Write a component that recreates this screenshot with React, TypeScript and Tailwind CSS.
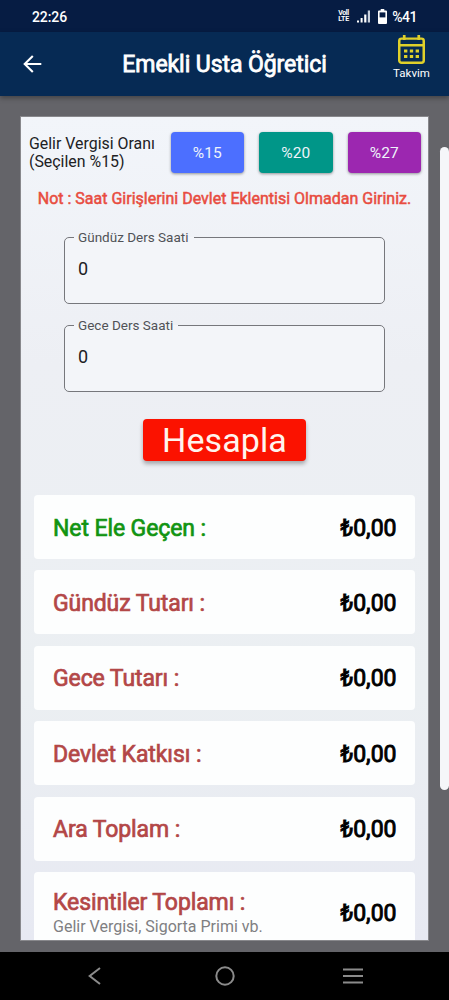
import React from "react";

const rates = [
  { label: "%15", color: "bg-[#4c6fff]" },
  { label: "%20", color: "bg-[#009688]" },
  { label: "%27", color: "bg-[#9c27b0]" },
];

const results = [
  { label: "Net Ele Geçen :", color: "text-[#119411]" },
  { label: "Gündüz Tutarı :", color: "text-[#b34747]" },
  { label: "Gece Tutarı :", color: "text-[#b34747]" },
  { label: "Devlet Katkısı :", color: "text-[#b34747]" },
  { label: "Ara Toplam :", color: "text-[#b34747]" },
  { label: "Kesintiler Toplamı :", color: "text-[#b34747]", note: "Gelir Vergisi, Sigorta Primi vb." },
];

function StatusBar() {
  return (
    <div className="flex h-8 items-center bg-[#061c43] pr-[32px] pl-8 text-white">
      <span className="pt-px text-[14px] leading-4 font-medium tracking-[-0.1px]">22:26</span>
      <div className="ml-auto flex items-center">
        <div className="flex w-3 flex-col text-[7px] leading-[6px] font-bold">
          <span className="tracking-[-0.4px]">Voll</span>
          <span className="tracking-[-0.2px]">LTE</span>
        </div>
        <svg className="ml-[7px]" width="14" height="13" viewBox="0 0 14 13" fill="white">
          <rect x="0" y="10.5" width="2" height="2" />
          <rect x="3.6" y="8" width="2" height="4.5" />
          <rect x="7.2" y="4.5" width="2.2" height="8" />
          <rect x="10.8" y="0.5" width="2.2" height="12" fill="#c8d0dc" />
        </svg>
        <svg className="ml-[7px]" width="9" height="15" viewBox="0 0 9 15">
          <path d="M2.7 0h3.6v1.6H8a1 1 0 0 1 1 1V14a1 1 0 0 1-1 1H1a1 1 0 0 1-1-1V2.6a1 1 0 0 1 1-1h1.7z" fill="white" />
          <rect x="1.6" y="3.4" width="5.8" height="5" fill="#061c43" />
        </svg>
        <span className="ml-[5px] pt-px text-[14px] leading-4 font-medium tracking-[-0.5px]">%41</span>
      </div>
    </div>
  );
}

function AppBar() {
  return (
    <header className="relative z-10 flex h-16 bg-[#062a54] text-white shadow-[0_2px_5px_rgba(0,0,0,0.35)]">
      <div className="flex w-[76px] items-center pl-[23px]">
        <svg width="19" height="18" viewBox="0 0 19 18" fill="none" stroke="white" strokeWidth="2.1">
          <path d="M18.3 9H1.7M9.8 .9 1.7 9l8.1 8.1" />
        </svg>
      </div>
      <h1 className="flex flex-1 items-center justify-center pt-[2px] pr-px text-[23px] font-normal tracking-[-0.07px] whitespace-nowrap [-webkit-text-stroke:0.8px_white]">
        Emekli Usta Öğretici
      </h1>
      <div className="flex w-[75px] flex-col items-center pt-[3px]">
        <svg width="27" height="29" viewBox="0 0 26 29" preserveAspectRatio="none" fill="none" stroke="#dfd02a">
          <rect x="1.2" y="3.6" width="23.6" height="24.2" rx="2.2" strokeWidth="2.4" />
          <path d="M1 10.2h24M6 0v5M20 0v5" strokeWidth="2.6" />
          <path d="M5.8 15.9h3.2M11.4 15.9h3.2M17 15.9h3.2M5.8 21.4h3.2M11.4 21.4h3.2M17 21.4h3.2" strokeWidth="3" />
        </svg>
        <span className="pt-px text-[11.5px] leading-4">Takvim</span>
      </div>
    </header>
  );
}

function HourField({ label }: { label: string }) {
  return (
    <fieldset className="h-[74px] w-[321px] rounded-[5px] border border-[#76777c] bg-[#f3f5f9] pl-[9px]">
      <legend className="pr-[5px] pl-[4px] text-[13.5px] leading-[14px] text-[#505257]">{label}</legend>
      <div className="px-[4px] pt-[14px] text-[18px] leading-[22px] text-[#202124]">0</div>
    </fieldset>
  );
}

export default function App() {
  return (
    <div className="flex h-[1000px] w-[449px] flex-col overflow-hidden bg-[#646469] font-['Roboto',sans-serif]">
      <StatusBar />
      <AppBar />
      <main className="flex min-h-0 flex-1 pt-[21px] pl-[21px]">
        <section className="h-[823px] w-[407px] shrink-0 overflow-hidden bg-[linear-gradient(#f2f5fa,#edeff4_30%,#ebeff2_70%,#e7e9f2)] shadow-[0_0_0_1px_#88888c]">
          <div className="flex items-center pt-[15px] pl-[8px]">
            <p className="w-[141.5px] pt-[1px] text-[15.9px] leading-[18.5px] whitespace-nowrap text-[#202124]">
              Gelir Vergisi Oranı
              <br />
              (Seçilen %15)
            </p>
            <div className="flex gap-[15px]">
              {rates.map((rate) => (
                <button
                  key={rate.label}
                  className={`h-[41px] w-[73.5px] rounded-[4px] pt-[2px] text-[15.5px] text-[#eef3fa] shadow-[0_1px_3px_rgba(0,0,0,0.4)] ${rate.color}`}
                >
                  {rate.label}
                </button>
              ))}
            </div>
          </div>
          <p className="mt-[16px] text-center text-[16px] leading-[20px] whitespace-nowrap text-[#e84c40] [-webkit-text-stroke:0.5px_#e84c40]">
            Not : Saat Girişlerini Devlet Eklentisi Olmadan Giriniz.
          </p>
          <div className="mt-[21px] flex flex-col items-center gap-[14px]">
            <HourField label="Gündüz Ders Saati" />
            <HourField label="Gece Ders Saati" />
          </div>
          <div className="mt-[27px] flex justify-center">
            <button className="h-[42px] w-[163px] rounded-[4px] bg-[#fb1200] text-[34px] leading-[42px] tracking-[0.1px] text-[#fff4ee] shadow-[0_3px_4px_rgba(0,0,0,0.3)]">
              Hesapla
            </button>
          </div>
          <div className="mt-[34px] flex flex-col gap-[11.4px] pr-[13px] pl-[13px]">
            {results.map((row) => (
              <div
                key={row.label}
                className={`flex shrink-0 items-center justify-between rounded-[4px] bg-[#fdfefe] pr-[18.5px] pl-[19px] ${row.note ? "h-[84px]" : "h-[64px] pt-[2px]"}`}
              >
                <div className={row.note ? "pb-[2px]" : ""}>
                  <div className={`text-[23px] leading-[27px] tracking-[-0.1px] [-webkit-text-stroke:0.7px_currentColor] ${row.color}`}>
                    {row.label}
                  </div>
                  {row.note && <div className="text-[16px] leading-[21px] text-[#7f7f82]">{row.note}</div>}
                </div>
                <div className="text-[23px] leading-[27px] text-black [-webkit-text-stroke:0.9px_black]">₺0,00</div>
              </div>
            ))}
          </div>
        </section>
        <div className="mt-[30px] ml-auto h-[643px] w-[9px] rounded-[5px] bg-[#f5f6f9]" />
      </main>
      <nav className="flex h-12 shrink-0 items-center bg-black">
        <svg className="ml-[88px]" width="13" height="18" viewBox="0 0 13 18" fill="none" stroke="#8b8b8b" strokeWidth="2">
          <path d="M12 1 1.7 9 12 17" />
        </svg>
        <svg className="ml-[114px]" width="20" height="20" viewBox="0 0 20 20" fill="none" stroke="#8b8b8b" strokeWidth="2">
          <circle cx="10" cy="10" r="8.7" />
        </svg>
        <svg className="ml-[108px]" width="20" height="16" viewBox="0 0 20 16" stroke="#8b8b8b" strokeWidth="2">
          <path d="M0 1.5h20M0 8h20M0 14.5h20" />
        </svg>
      </nav>
    </div>
  );
}
